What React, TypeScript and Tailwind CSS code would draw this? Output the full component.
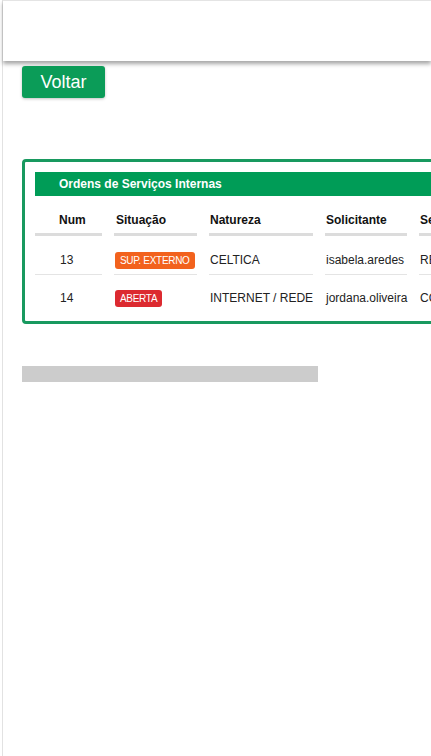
const rows = [
  { num: '13', situacao: 'SUP. EXTERNO', cor: 'bg-[#f2621d]', natureza: 'CELTICA', solicitante: 'isabela.aredes', setor: 'RECEPÇÃO' },
  { num: '14', situacao: 'ABERTA', cor: 'bg-[#dc2a30]', natureza: 'INTERNET / REDE', solicitante: 'jordana.oliveira', setor: 'COMERCIAL' },
];

const cols = [
  { label: 'Num', w: 'w-[67px]', pl: 'pl-[24px]' },
  { label: 'Situação', w: 'w-[83px]', pl: 'pl-[2px]' },
  { label: 'Natureza', w: 'w-[104px]', pl: 'pl-[1px]' },
  { label: 'Solicitante', w: 'w-[82px]', pl: 'pl-[1px]' },
  { label: 'Setor', w: 'w-[90px]', pl: 'pl-[1px]' },
];

const cell = (first: boolean) =>
  first ? 'border-b border-[#e4e4e4] pt-[16px] pb-[5px]' : 'pt-[15px]';

const App = () => {
  return (
    <div className="w-[431px] h-[756px] overflow-hidden bg-white font-['Liberation_Sans',Arial,sans-serif]">
      <div className="ml-[2px] h-full border-l border-[#e2e2e2]">
        <div className="h-[61px] border-t border-[#e4e4e4] bg-white shadow-[0_3px_4px_rgba(0,0,0,0.35)]" />

        <div className="pl-[19px] pt-[5px]">
          <button className="h-[32px] w-[83px] rounded-[3px] bg-[#0b9c58] text-[18px] leading-none text-white shadow-[0_1px_3px_rgba(0,0,0,0.25)]">
            Voltar
          </button>
        </div>

        <div className="mt-[61px] ml-[19px] w-[600px] rounded-[4px] border-[3px] border-[#18995f] px-[10px] pt-[10px] pb-[14px]">
          <div className="flex h-[24px] items-center bg-[#009c57] pl-[24px] text-[12px] font-bold text-white">
            Ordens de Serviços Internas
          </div>

          <div className="flex gap-[12px]">
            {cols.map(c => (
              <div
                key={c.label}
                className={`${c.w} ${c.pl} shrink-0 whitespace-nowrap border-b-[3px] border-[#dcdcdc] pt-[17px] pb-[6px] text-[12px] leading-[14px] font-bold text-[#111]`}>
                {c.label}
              </div>
            ))}
          </div>

          {rows.map((r, i) => (
            <div key={r.num} className="flex gap-[12px] whitespace-nowrap text-[12px] leading-[17px] text-[#222]">
              <div className={`w-[67px] shrink-0 pl-[25px] ${cell(i === 0)}`}>{r.num}</div>
              <div className={`w-[83px] shrink-0 pl-[1px] ${cell(i === 0)}`}>
                <span className={`inline-block h-[17px] rounded-[3px] px-[5px] text-[10px] leading-[17px] tracking-[-0.3px] text-white ${r.cor}`}>
                  {r.situacao}
                </span>
              </div>
              <div className={`w-[104px] shrink-0 pl-[1px] ${cell(i === 0)}`}>{r.natureza}</div>
              <div className={`w-[82px] shrink-0 pl-[1px] ${cell(i === 0)}`}>{r.solicitante}</div>
              <div className={`w-[90px] shrink-0 pl-[1px] ${cell(i === 0)}`}>{r.setor}</div>
            </div>
          ))}
        </div>

        <div className="mt-[42px] ml-[19px] h-[16px] w-[296px] bg-[#cccccc]" />
      </div>
    </div>
  );
};

export default App;
